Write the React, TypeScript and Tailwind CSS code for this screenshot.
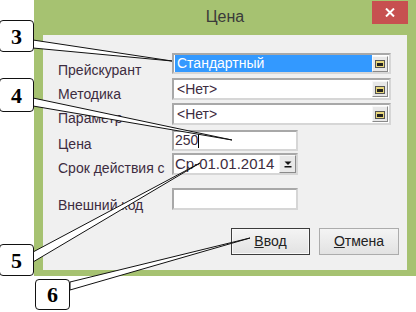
import React from "react";

function PickBtn() {
  return (
    <div className="w-[16px] h-[16px] my-auto mr-[1px] flex items-center justify-center bg-[#e8e8e8] border border-[#f8f8f8] border-r-[#8a8a8a] border-b-[#8a8a8a]">
      <svg width="10" height="9" viewBox="0 0 10 9">
        <rect x="0.5" y="1.5" width="9" height="7" fill="#e9d77a" stroke="#555" strokeWidth="1" />
        <rect x="2" y="4" width="6" height="3" fill="#222" />
      </svg>
    </div>
  );
}

function Field({ w, h, children, btn }: { w: string; h: string; children?: React.ReactNode; btn?: React.ReactNode }) {
  return (
    <div className={`${w} ${h} flex bg-white border-2 border-[#a8a8a8] border-r-[#d6d6d6] border-b-[#d6d6d6]`}>
      <div className="flex-1 min-w-0 flex items-center">{children}</div>
      {btn}
    </div>
  );
}

export default function App() {
  return (
    <div
      className="relative w-[416px] h-[312px] bg-white overflow-hidden"
      style={{ fontFamily: '"Liberation Sans", Arial, sans-serif' }}
    >
      <div className="ml-[34px] w-[382px] h-[276px] bg-[#a6c271] flex flex-col">
        <div className="relative h-[35px] flex items-center justify-center">
          <span className="text-[16px] text-[#3a3a3a] mt-[-2px]">Цена</span>
          <div className="absolute right-[8px] top-[1px] w-[36px] h-[23px] bg-[#c75050] flex items-center justify-center">
            <svg width="10" height="9" viewBox="0 0 10 9">
              <path d="M1 0.5 L9 8.5 M9 0.5 L1 8.5" stroke="white" strokeWidth="2" />
            </svg>
          </div>
        </div>
        <div className="mx-[9px] h-[235px] bg-[#f0f0f0] flex flex-col">
          <div className="h-[175px] flex">
            <div className="w-[129px] pl-[15px] pt-[23px] flex flex-col text-[14px] leading-[24px] text-[#3d2c40]">
              <span>Прейскурант</span>
              <span>Методика</span>
              <span>Параметр</span>
              <span className="mt-[2px]">Цена</span>
              <span>Срок действия с</span>
              <span className="mt-[13px]">Внешний код</span>
            </div>
            <div className="pt-[18px] flex flex-col text-[14px] text-[#3d2c40]">
              <Field w="w-[219px]" h="h-[21px]" btn={<PickBtn />}>
                <div className="ml-[1px] h-[17px] w-[197px] bg-[#3399ff] text-white leading-[17px] pl-[2px]">
                  Стандартный
                </div>
              </Field>
              <div className="mt-[4px]">
                <Field w="w-[219px]" h="h-[22px]" btn={<PickBtn />}>
                  <span className="pl-[3px]">&lt;Нет&gt;</span>
                </Field>
              </div>
              <div className="mt-[3px]">
                <Field w="w-[219px]" h="h-[22px]" btn={<PickBtn />}>
                  <span className="pl-[3px]">&lt;Нет&gt;</span>
                </Field>
              </div>
              <div className="mt-[5px]">
                <Field w="w-[126px]" h="h-[21px]">
                  <span className="pl-[1px]">250</span>
                  <span className="w-px h-[15px] bg-black" />
                </Field>
              </div>
              <div className="mt-[2px]">
                <Field
                  w="w-[126px]"
                  h="h-[22px]"
                  btn={
                    <div className="w-[17px] h-[18px] flex items-center justify-center bg-[#e8e8e8] border border-[#f8f8f8] border-r-[#8a8a8a] border-b-[#8a8a8a]">
                      <svg width="8" height="7" viewBox="0 0 8 7">
                        <path d="M0.5 0.5 H7.5 L4 4 Z" fill="#111" />
                        <rect x="0.5" y="5" width="7" height="1.5" fill="#111" />
                      </svg>
                    </div>
                  }
                >
                  <span className="pl-[1px] text-[15px]">Ср-01.01.2014</span>
                </Field>
              </div>
              <div className="mt-[13px]">
                <Field w="w-[126px]" h="h-[22px]" />
              </div>
            </div>
          </div>
          <div className="mt-[18px] pr-[8px] flex justify-end gap-[9px] text-[14px] text-[#222]">
            <div className="w-[79px] h-[27px] flex items-center justify-center border border-[#3c3c3c] bg-gradient-to-b from-[#f4f4f4] to-[#e2e2e2] shadow-[inset_0_0_0_1px_#f8f8f8]">
              <span><span className="underline">В</span>вод</span>
            </div>
            <div className="w-[80px] h-[27px] flex items-center justify-center border border-[#acacac] bg-gradient-to-b from-[#f4f4f4] to-[#e2e2e2]">
              <span><span className="underline">О</span>тмена</span>
            </div>
          </div>
        </div>
      </div>

      <svg className="absolute inset-0 pointer-events-none" width="416" height="312" viewBox="0 0 416 312">
        <polygon points="33,40 33,48 172,61" fill="white" stroke="#111" strokeWidth="1" />
        <polygon points="33,98 33,106 232,140" fill="white" stroke="#111" strokeWidth="1" />
        <polygon points="33,252 33,262 200,163" fill="white" stroke="#111" strokeWidth="1" />
        <polygon points="70,282 70,290 250,238" fill="white" stroke="#111" strokeWidth="1" />
      </svg>

      {[
        { n: "3", c: "left-[-1px] top-[20px] w-[35px] h-[32px]" },
        { n: "4", c: "left-[-1px] top-[78px] w-[35px] h-[34px]" },
        { n: "5", c: "left-[-1px] top-[244px] w-[35px] h-[32px]" },
        { n: "6", c: "left-[35px] top-[279px] w-[35px] h-[31px]" },
      ].map((b) => (
        <div
          key={b.n}
          className={`absolute ${b.c} bg-white border-[1.5px] border-[#111] rounded-[4px] flex items-center justify-center text-[22px] font-bold text-black`}
          style={{ fontFamily: '"Liberation Serif", "Times New Roman", serif' }}
        >
          {b.n}
        </div>
      ))}
    </div>
  );
}
